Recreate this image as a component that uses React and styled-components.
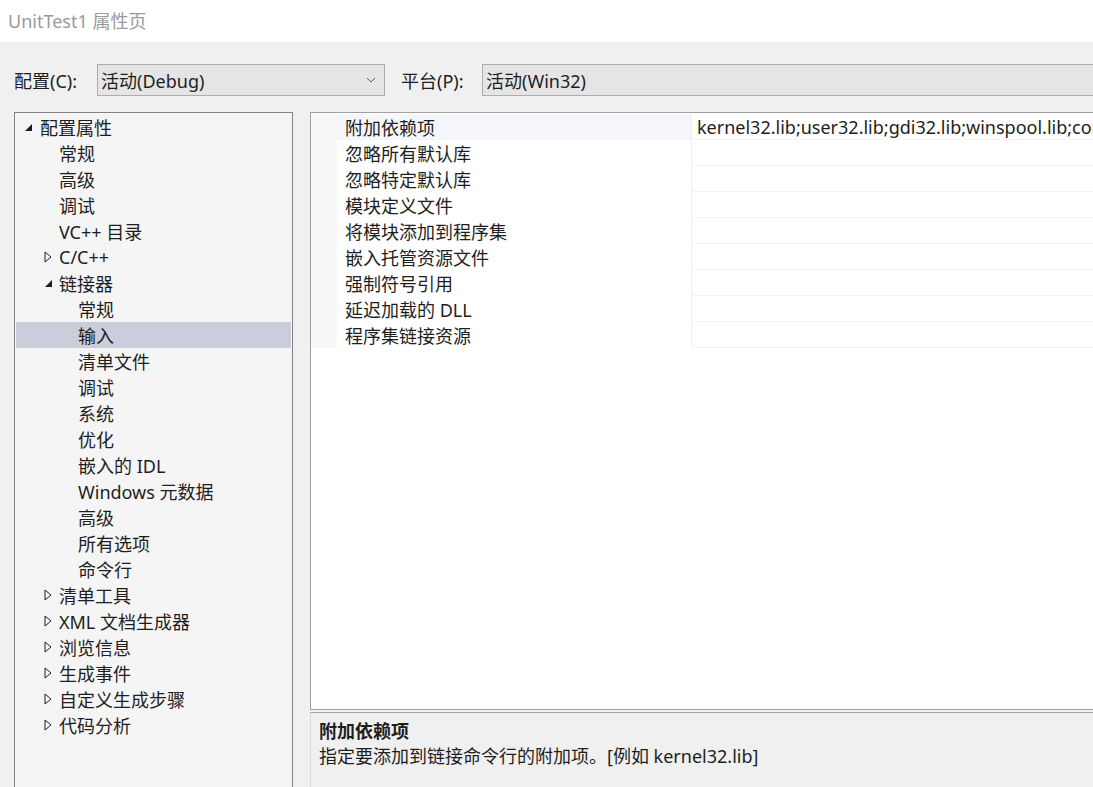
import React from "react";
import styled, { createGlobalStyle } from "styled-components";

const FONT = `"Segoe UI", "Noto Sans", "Noto Sans CJK SC", sans-serif`;

const Global = createGlobalStyle`
  html, body { margin: 0; padding: 0; background: #f0f0f0; overflow: hidden; }
  * { box-sizing: border-box; }
`;

const Window = styled.div`
  width: 1093px;
  height: 787px;
  overflow: hidden;
  display: flex;
  flex-direction: column;
  background: #f0f0f0;
  font-family: ${FONT};
  font-size: 18px;
  color: #1e1e1e;
`;

const TitleBar = styled.div`
  height: 42px;
  flex: none;
  background: #ffffff;
  display: flex;
  align-items: center;
  padding-left: 8px;
  padding-bottom: 2px;
  color: #9a9a9a;
  font-size: 18px;
`;

const ConfigBar = styled.div`
  flex: none;
  display: flex;
  align-items: center;
  height: 70px;
  padding: 22px 0 16px 14px;
`;

const Label = styled.span`
  width: ${(p) => p.$w}px;
  flex: none;
  white-space: nowrap;
`;

const Combo = styled.div`
  flex: none;
  width: ${(p) => p.$w}px;
  height: 32px;
  background: #e5e5e5;
  border: 1px solid #adadad;
  display: flex;
  align-items: center;
  padding: 0 0 0 3px;
  margin-right: ${(p) => p.$mr || 0}px;
`;

const ComboText = styled.span`
  flex: 1;
  white-space: nowrap;
`;

const Chevron = styled.svg`
  flex: none;
  margin-right: 8px;
`;

const Body = styled.div`
  flex: 1;
  display: flex;
  padding-left: 14px;
  gap: 17px;
  min-height: 0;
`;

const Tree = styled.div`
  width: 279px;
  flex: none;
  background: #f5f5f5;
  border: 1px solid #828282;
  border-bottom: none;
  padding: 1px 1px 0 1px;
  display: flex;
  flex-direction: column;
`;

const TreeRow = styled.div`
  height: 26px;
  display: flex;
  align-items: center;
  padding-left: ${(p) => p.$indent}px;
  background: ${(p) => (p.$selected ? "#cbcdda" : "transparent")};
  white-space: nowrap;
`;

const Arrow = styled.span`
  width: ${(p) => p.$w}px;
  flex: none;
  display: flex;
  align-items: center;
`;

const RightCol = styled.div`
  flex: 1;
  display: flex;
  flex-direction: column;
  min-width: 0;
`;

const Grid = styled.div`
  height: 598px;
  flex: none;
  background: #ffffff;
  border: 1px solid #9e9e9e;
  border-right: none;
  padding-top: 1px;
  display: flex;
  flex-direction: column;
  width: 800px;
`;

const GridRow = styled.div`
  height: 26px;
  display: grid;
  grid-template-columns: 26px 355px 1fr;
  border-bottom: 1px solid #f3f3f3;
`;

const Gutter = styled.div`
  background: #f7f7f7;
`;

const NameCell = styled.div`
  display: flex;
  align-items: center;
  padding-left: 8px;
  background: ${(p) => (p.$active ? "#f4f6fa" : "#ffffff")};
  border-right: 1px solid #f0f0f0;
  white-space: nowrap;
`;

const ValueCell = styled.div`
  display: flex;
  align-items: center;
  padding-left: 5px;
  white-space: nowrap;
  overflow: hidden;
`;

const Desc = styled.div`
  flex: 1;
  margin-top: 2px;
  width: 800px;
  border-top: 1px solid #a0a0a0;
  border-left: 1px solid #d8d8d8;
  background: #f0f0f0;
  padding: 6px 0 0 8px;
  display: flex;
  flex-direction: column;
`;

const DescTitle = styled.div`
  font-weight: bold;
  height: 25px;
  line-height: 25px;
`;

const DescText = styled.div`
  height: 25px;
  line-height: 25px;
`;

const Expanded = () => (
  <svg width="9" height="9" viewBox="0 0 9 9">
    <polygon points="8,1 8,8 1,8" fill="#1e1e1e" />
  </svg>
);

const Collapsed = () => (
  <svg width="8" height="12" viewBox="0 0 8 12">
    <polygon points="1,1 7,6 1,11" fill="none" stroke="#1e1e1e" strokeWidth="1" />
  </svg>
);

const tree = [
  { t: "配置属性", lvl: 0, a: "e" },
  { t: "常规", lvl: 1 },
  { t: "高级", lvl: 1 },
  { t: "调试", lvl: 1 },
  { t: "VC++ 目录", lvl: 1 },
  { t: "C/C++", lvl: 1, a: "c" },
  { t: "链接器", lvl: 1, a: "e" },
  { t: "常规", lvl: 2 },
  { t: "输入", lvl: 2, sel: true },
  { t: "清单文件", lvl: 2 },
  { t: "调试", lvl: 2 },
  { t: "系统", lvl: 2 },
  { t: "优化", lvl: 2 },
  { t: "嵌入的 IDL", lvl: 2 },
  { t: "Windows 元数据", lvl: 2 },
  { t: "高级", lvl: 2 },
  { t: "所有选项", lvl: 2 },
  { t: "命令行", lvl: 2 },
  { t: "清单工具", lvl: 1, a: "c" },
  { t: "XML 文档生成器", lvl: 1, a: "c" },
  { t: "浏览信息", lvl: 1, a: "c" },
  { t: "生成事件", lvl: 1, a: "c" },
  { t: "自定义生成步骤", lvl: 1, a: "c" },
  { t: "代码分析", lvl: 1, a: "c" },
];

const props = [
  ["附加依赖项", "kernel32.lib;user32.lib;gdi32.lib;winspool.lib;comdlg32.lib;advapi32.lib;shell32.lib;ole32.lib;oleaut32.lib;uuid.lib;odbc32.lib;odbccp32.lib;%(AdditionalDependencies)"],
  ["忽略所有默认库", ""],
  ["忽略特定默认库", ""],
  ["模块定义文件", ""],
  ["将模块添加到程序集", ""],
  ["嵌入托管资源文件", ""],
  ["强制符号引用", ""],
  ["延迟加载的 DLL", ""],
  ["程序集链接资源", ""],
];

function TreeItem({ item }) {
  const textX = [40, 59, 78][item.lvl] - 16;
  const arrowW = item.lvl === 0 ? 16 : 15;
  const arrowStart = textX - arrowW;
  return (
    <TreeRow $indent={item.a ? arrowStart : textX} $selected={item.sel}>
      {item.a && (
        <Arrow $w={arrowW}>{item.a === "e" ? <Expanded /> : <Collapsed />}</Arrow>
      )}
      <span>{item.t}</span>
    </TreeRow>
  );
}

export default function App() {
  return (
    <>
      <Global />
      <Window>
        <TitleBar>UnitTest1 属性页</TitleBar>
        <ConfigBar>
          <Label $w={83}>配置(C):</Label>
          <Combo $w={288} $mr={16}>
            <ComboText>活动(Debug)</ComboText>
            <Chevron width="10" height="6" viewBox="0 0 10 6">
              <polyline points="1,1 5,5 9,1" fill="none" stroke="#606060" strokeWidth="1" />
            </Chevron>
          </Combo>
          <Label $w={81}>平台(P):</Label>
          <Combo $w={640}>
            <ComboText>活动(Win32)</ComboText>
          </Combo>
        </ConfigBar>
        <Body>
          <Tree>
            {tree.map((it, i) => (
              <TreeItem key={i} item={it} />
            ))}
          </Tree>
          <RightCol>
            <Grid>
              {props.map(([n, v], i) => (
                <GridRow key={i}>
                  <Gutter />
                  <NameCell $active={i === 0}>{n}</NameCell>
                  <ValueCell>{v}</ValueCell>
                </GridRow>
              ))}
            </Grid>
            <Desc>
              <DescTitle>附加依赖项</DescTitle>
              <DescText>指定要添加到链接命令行的附加项。[例如 kernel32.lib]</DescText>
            </Desc>
          </RightCol>
        </Body>
      </Window>
    </>
  );
}
